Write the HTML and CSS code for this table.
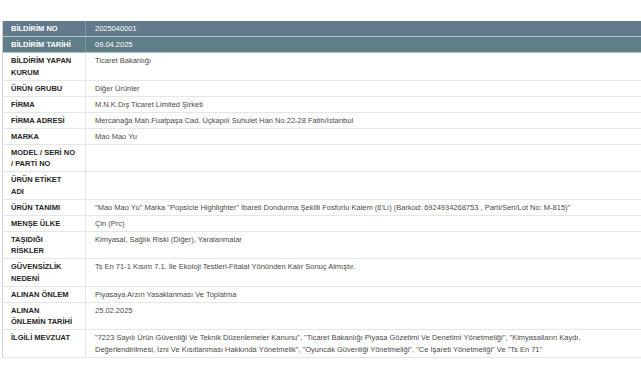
FILE: index.html
```html
<!DOCTYPE html>
<html lang="tr">
<head>
    <meta charset="UTF-8">
    <meta name="viewport" content="width=device-width, initial-scale=1.0">
    <title>Bildirim Detayı</title>
    <link rel="stylesheet" href="styles.css">
</head>
<body>

<div class="page">
    <table class="notice-table">
        <tbody>
            <tr class="head head-first">
                <th>BİLDİRİM NO</th>
                <td>2025040001</td>
            </tr>
            <tr class="head">
                <th>BİLDİRİM TARİHİ</th>
                <td>09.04.2025</td>
            </tr>
            <tr>
                <th>BİLDİRİM YAPAN<br>KURUM</th>
                <td>Ticaret Bakanlığı</td>
            </tr>
            <tr>
                <th>ÜRÜN GRUBU</th>
                <td>Diğer Ürünler</td>
            </tr>
            <tr>
                <th>FİRMA</th>
                <td>M.N.K.Dış Ticaret Limited Şirketi</td>
            </tr>
            <tr>
                <th>FİRMA ADRESİ</th>
                <td>Mercanağa Mah.Fuatpaşa Cad. Üçkapılı Suhulet Han No.22-28 Fatih/İstanbul</td>
            </tr>
            <tr>
                <th>MARKA</th>
                <td>Mao Mao Yu</td>
            </tr>
            <tr>
                <th>MODEL / SERİ NO<br>/ PARTİ NO</th>
                <td></td>
            </tr>
            <tr>
                <th>ÜRÜN ETİKET<br>ADI</th>
                <td></td>
            </tr>
            <tr>
                <th>ÜRÜN TANIMI</th>
                <td>"Mao Mao Yu" Marka "Popsicle Highlighter" İbareli Dondurma Şekilli Fosforlu Kalem (6'Lı) (Barkod: 6924934268753 , Parti/Seri/Lot No: M-815)"</td>
            </tr>
            <tr>
                <th>MENŞE ÜLKE</th>
                <td>Çin (Prc)</td>
            </tr>
            <tr>
                <th>TAŞIDIĞI<br>RİSKLER</th>
                <td>Kimyasal, Sağlık Riski (Diğer), Yaralanmalar</td>
            </tr>
            <tr>
                <th>GÜVENSİZLİK<br>NEDENİ</th>
                <td>Ts En 71-1 Kısım 7.1. İle Ekoloji Testleri-Fitalat Yönünden Kalır Sonuç Almıştır.</td>
            </tr>
            <tr>
                <th>ALINAN ÖNLEM</th>
                <td>Piyasaya Arzın Yasaklanması Ve Toplatma</td>
            </tr>
            <tr>
                <th>ALINAN<br>ÖNLEMİN TARİHİ</th>
                <td>25.02.2025</td>
            </tr>
            <tr>
                <th>İLGİLİ MEVZUAT</th>
                <td>"7223 Sayılı Ürün Güvenliği Ve Teknik Düzenlemeler Kanunu", "Ticaret Bakanlığı Piyasa Gözetimi Ve Denetimi Yönetmeliği", "Kimyasalların Kaydı, Değerlendirilmesi, İzni Ve Kısıtlanması Hakkında Yönetmelik", "Oyuncak Güvenliği Yönetmeliği", "Ce İşareti Yönetmeliği" Ve "Ts En 71"</td>
            </tr>
        </tbody>
    </table>
</div>

</body>
</html>
```

FILE: styles.css
```css
/* General Styles */
body {
    margin: 0;
    background-color: #fff;
    font-family: 'Liberation Sans', Arial, sans-serif;
    color: #4a4a4a;
}

.page {
    padding: 21px 0 0 2px;
    overflow: hidden;
}

/* Notice Table */
.notice-table {
    width: 100%;
    border-collapse: collapse;
    border-left: 1px solid #cfcfcf;
    font-size: 7.5px;
    line-height: 11.5px;
}

.notice-table th,
.notice-table td {
    padding: 2px 10px 1.5px 9px;
    border-bottom: 1px solid #e6e6e6;
    text-align: left;
    vertical-align: top;
}

.notice-table th {
    width: 65.5px;
    padding-left: 8px;
    padding-right: 8.5px;
    border-right: 1px solid #e6e6e6;
    font-weight: bold;
    color: #262626;
    white-space: nowrap;
}

.notice-table td {
    color: #4a4a4a;
}

/* Header Rows */
.notice-table .head th,
.notice-table .head td {
    background-color: #5f7e88;
    color: #fff;
    border-bottom-color: #a9c6cc;
    border-right-color: #7e99a2;
}

.notice-table .head-first th,
.notice-table .head-first td {
    background-color: #627a8c;
}
```
